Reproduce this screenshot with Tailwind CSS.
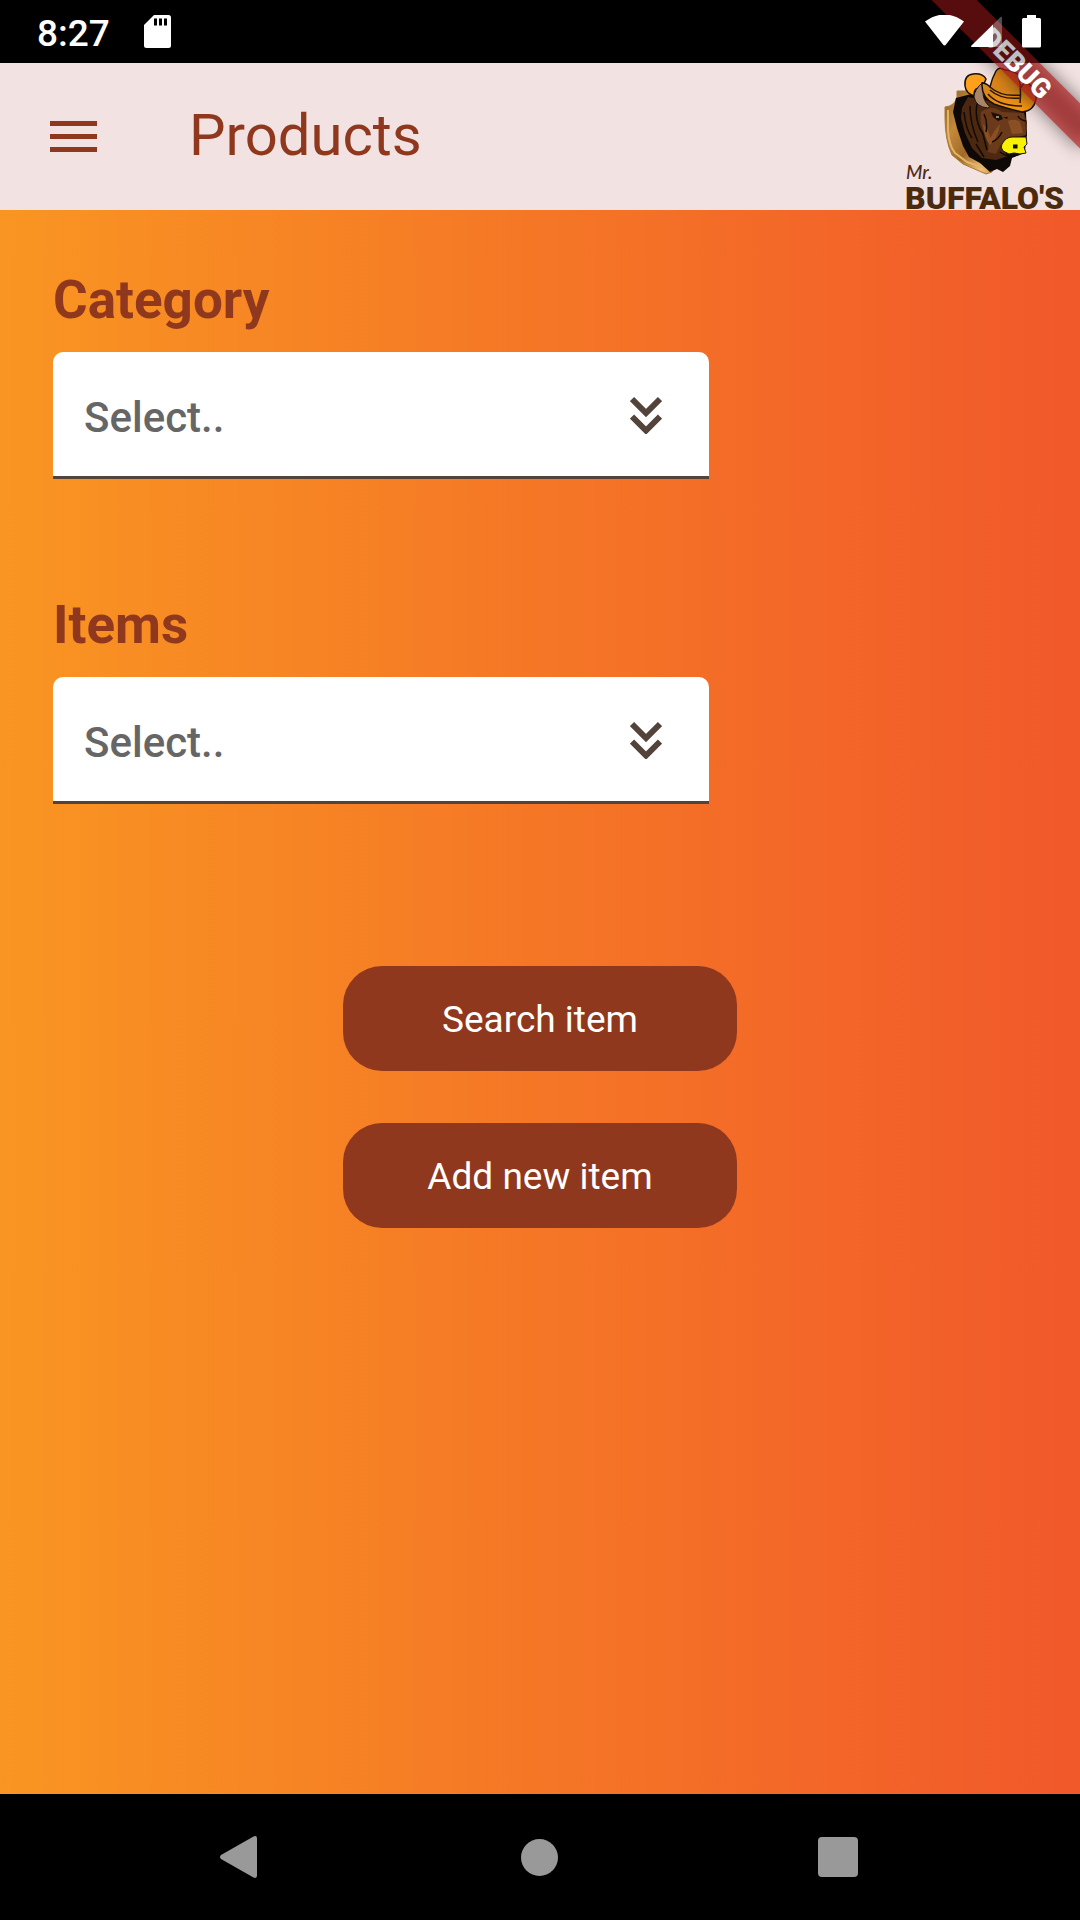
<!DOCTYPE html>
<html lang="en">
<head>
<meta charset="utf-8">
<meta name="viewport" content="width=device-width, initial-scale=1">
<title>Products</title>
<script src="https://cdn.jsdelivr.net/npm/@tailwindcss/browser@4"></script>
</head>
<body class="relative flex min-h-screen flex-col overflow-x-hidden bg-black font-['Roboto',sans-serif]">

  <!-- Status bar -->
  <div class="flex h-[63px] shrink-0 items-center justify-between bg-black pr-[38px] pl-[37px] text-white">
    <div class="flex items-center gap-[34px]">
      <span class="pt-1 text-[37px] leading-[44px] font-medium">8:27</span>
      <svg class="h-[34px] w-[27px]" viewBox="0 0 27 34" aria-label="SD card">
        <path fill="#fff" d="M10 0H24.500Q27 0 27 2.500V30.500Q27 33 24.500 33H2.500Q0 33 0 30.500V10Z"/>
        <path fill="#000" d="M10 3.500h3v7h-3zM15 3.500h3v7h-3zM20 3.500h3v7h-3z"/>
      </svg>
    </div>
    <div class="relative z-20 flex items-center">
      <svg class="h-[34px] w-[117px]" viewBox="925 15 117 34" aria-label="Wi-Fi, signal, battery">
        <path fill="#fff" d="M925 21.500Q944.500 7.500 964 21.500L946 44.500Q944.500 46.500 943 44.500Z"/>
        <path fill="#fff" d="M993 24.500V47H971.500Q970.500 46.500 971.500 45.500Z"/>
        <path fill="#fff" fill-opacity=".3" d="M993 24.500L1000.500 17Q1002 16 1002 18V47H993Z"/>
        <path fill="#fff" d="M1027 18V15h9v3h3.500q1.500 0 1.500 1.500v26.500q0 1.500-1.500 1.500h-16q-1.500 0-1.500-1.500v-26.500q0-1.500 1.500-1.500z"/>
      </svg>
    </div>
  </div>

  <!-- App bar -->
  <header class="flex h-[147px] shrink-0 items-center bg-[#f2e2e1] text-[#8f381e]">
    <button type="button" class="flex h-[126px] w-[147px] items-center justify-center" aria-label="Open menu">
      <svg class="h-8 w-[47px]" viewBox="0 0 47 32"><path fill="currentColor" d="M0 0h47v5H0zM0 13h47v5H0zM0 26h47v5H0z"/></svg>
    </button>
    <h1 class="ml-[42px] pb-1 text-[58px] leading-[68px]">Products</h1>
    <svg class="ml-auto h-[147px] w-[180px]" viewBox="900 63 180 147" role="img" aria-label="Mr. Buffalo's">
      <defs>
        <linearGradient id="gold" x1="0" y1="0" x2="1" y2="1">
          <stop offset="0" stop-color="#8a5c20"/><stop offset=".3" stop-color="#c48a3c"/>
          <stop offset=".55" stop-color="#a06a26"/><stop offset=".8" stop-color="#f0c078"/><stop offset="1" stop-color="#b87a2c"/>
        </linearGradient>
        <linearGradient id="hat" x1="0" y1="0" x2="0" y2="1">
          <stop offset="0" stop-color="#f08a14"/><stop offset=".5" stop-color="#d8841c"/><stop offset="1" stop-color="#ff9a10"/>
        </linearGradient>
      </defs>
      <!-- Wooden shield -->
      <path fill="url(#gold)" stroke="#a97a34" d="M957 91H977L1000 150L992 172L986 174L963 164L952 155Q945 140 945 118V107Q955 106 957 97Z"/>
      <path fill="none" stroke="#e2b468" stroke-width="2" d="M948 110V130Q949 146 955 153L967 162L988 169"/>
      <!-- Head -->
      <path fill="#0e0906" d="M956 98L975 93L1010 100L1026 112L1027 135L1025 150L1019 155L1012 158L1010 166L1003 172L997 169L990 172L980 163L969 157L963 146L957 128L953 112Z"/>
      <path fill="#4c2810" d="M962 108L968 97L1000 103L1024 113L1027 122L1026 135L1010 142L1003 150L1008 156L996 160L982 158L972 148L965 133L961 118Z"/>
      <path fill="#6b3a1a" d="M981 112Q992 104 1002 112L1024 113L1026 135L1010 138L1001 144L996 154L988 152Q990 140 985 134Q979 124 981 112Z"/>
      <path fill="#8a5024" d="M983 124Q989 130 990 138Q995 130 1000 124Q998 138 990 145Q984 138 983 124ZM1008 121Q1014 118 1020 122L1023 133L1012 134Z"/>
      <path fill="none" stroke="#120a05" stroke-width="1.500" d="M964 112Q966 130 972 138M970 106Q970 124 978 142M977 104Q974 120 983 134L987 150M984 114Q988 122 986 132M1002 132Q998 140 992 142M976 144L984 157M1000 152Q1010 160 1024 152M1018 116Q1020 120 1026 121"/>
      <path fill="#1c0f07" d="M991 112L1001 115L1003 119L998 121L993 117ZM1003 117L1008 117L1007 119Z"/>
      <path fill="#8f8578" d="M996 116h3v2h-3z"/>
      <!-- Hat and horn -->
      <path fill="#ffa01c" stroke="#15100b" stroke-width="1.500" d="M965 86Q964 75 973 74Q983 73 986 79L983 86L976 89Q973 93 975 96Q966 94 965 86Z"/>
      <path fill="#a88468" stroke="#241710" d="M983 82Q974 90 974 97Q976 107 988 108Q991 107 988 105Q983 100 983 92Z"/>
      <path fill="url(#hat)" stroke="#15100b" stroke-width="1.500" d="M982 83Q986 83 990 87Q992 78 996 71Q999 66 1005 70Q1011 70 1018 74L1021 88Q1023 81 1029 84Q1037 89 1036 99Q1034 111 1022 112Q1005 108 994 104Q981 97 982 83Z"/>
      <path fill="none" stroke="#2b1708" stroke-width="1.500" d="M990 87Q1001 97 1020 95M990 90Q1001 100 1021 98M988 94Q998 106 1022 106M1020 86Q1021 92 1020 103"/>
      <!-- Muzzle -->
      <path fill="#f8f005" stroke="#18130a" stroke-width="1" d="M1002 144Q1006 137 1012 137L1026 137L1027 144L1024 147L1026 153L1020 154L1014 153L1009 154L1003 151Q1000 147 1002 144Z"/>
      <path fill="#100b04" d="M1013 144.500h4.500v4h-4.500z"/>
      <text x="906" y="179" font-family="Lato" font-style="italic" font-weight="500" font-size="19" fill="#4c2a14">Mr.</text>
      <text x="905" y="209" font-family="Roboto" font-weight="900" font-size="32" fill="#4c2a0e">BUFFALO'S</text>
    </svg>
  </header>

  <!-- Corner ribbon -->
  <div class="pointer-events-none absolute top-0 right-0 z-10 h-[200px] w-[200px] overflow-hidden">
    <svg class="h-[200px] w-[200px]" viewBox="-200 0 200 200">
      <defs><filter id="soft" x="-50%" y="-200%" width="200%" height="500%"><feGaussianBlur stdDeviation="9"/></filter></defs>
      <g transform="rotate(45)">
        <rect x="-105" y="73" width="210" height="32" fill="#000" fill-opacity=".5" filter="url(#soft)"/>
        <rect x="-150" y="73" width="300" height="32" fill="#b71c1c" fill-opacity=".63"/>
        <text x="0" y="99" text-anchor="middle" font-family="Roboto" font-weight="900" font-size="27" fill="#fff">DEBUG</text>
      </g>
      <rect x="-200" y="0" width="200" height="63" fill="#000" fill-opacity=".25"/>
    </svg>
  </div>

  <!-- Content -->
  <main class="flex flex-1 flex-col bg-linear-to-r/srgb from-[#f99522] to-[#f1582a] px-[53px] pt-[59px] pb-10">
    <form class="flex flex-col">
      <label for="category" class="text-[53px] leading-[62px] font-bold text-[#8f381e]">Category</label>
      <div class="relative mt-[21px] w-[656px] max-w-full">
        <select id="category" class="block h-[127px] w-full appearance-none rounded-t-[10px] border-b-[3px] border-[#54433a] bg-white pt-[6px] pr-24 pl-[31px] text-[42px] font-medium text-[#666]">
          <option>Select..</option>
        </select>
        <svg class="pointer-events-none absolute top-[44px] right-[47px] h-[38px] w-[32px]" viewBox="0 0 32 38" fill="none" stroke="#54433a" stroke-width="6"><path d="M2 3L16 17L30 3M2 20.500L16 34.500L30 20.500"/></svg>
      </div>

      <label for="items" class="mt-[115px] text-[53px] leading-[62px] font-bold text-[#8f381e]">Items</label>
      <div class="relative mt-[21px] w-[656px] max-w-full">
        <select id="items" class="block h-[127px] w-full appearance-none rounded-t-[10px] border-b-[3px] border-[#54433a] bg-white pt-[6px] pr-24 pl-[31px] text-[42px] font-medium text-[#666]">
          <option>Select..</option>
        </select>
        <svg class="pointer-events-none absolute top-[44px] right-[47px] h-[38px] w-[32px]" viewBox="0 0 32 38" fill="none" stroke="#54433a" stroke-width="6"><path d="M2 3L16 17L30 3M2 20.500L16 34.500L30 20.500"/></svg>
      </div>

      <div class="mt-[162px] flex flex-col items-center gap-[52px]">
        <button type="button" class="h-[105px] w-[394px] max-w-full rounded-[39px] bg-[#8f381e] pt-[2px] text-[37px] text-white">Search item</button>
        <button type="button" class="h-[105px] w-[394px] max-w-full rounded-[39px] bg-[#8f381e] pt-[2px] text-[37px] text-white">Add new item</button>
      </div>
    </form>
  </main>

  <!-- System navigation -->
  <nav class="flex h-[126px] shrink-0 items-center justify-center bg-black pr-[2px] text-[#999]">
    <button type="button" class="flex h-full w-[299px] items-center justify-center" aria-label="Back">
      <svg class="h-[42px] w-[40px]" viewBox="0 0 40 42"><path fill="currentColor" d="M33.500.500Q37 -1 37 2.500V39.500Q37 43 33.500 41.500L1 23Q-1 21 1 19Z"/></svg>
    </button>
    <button type="button" class="flex h-full w-[299px] items-center justify-center" aria-label="Home">
      <span class="size-[37px] rounded-full bg-current"></span>
    </button>
    <button type="button" class="flex h-full w-[299px] items-center justify-center" aria-label="Recent apps">
      <span class="size-10 rounded-[4px] bg-current"></span>
    </button>
  </nav>
</body>
</html>
